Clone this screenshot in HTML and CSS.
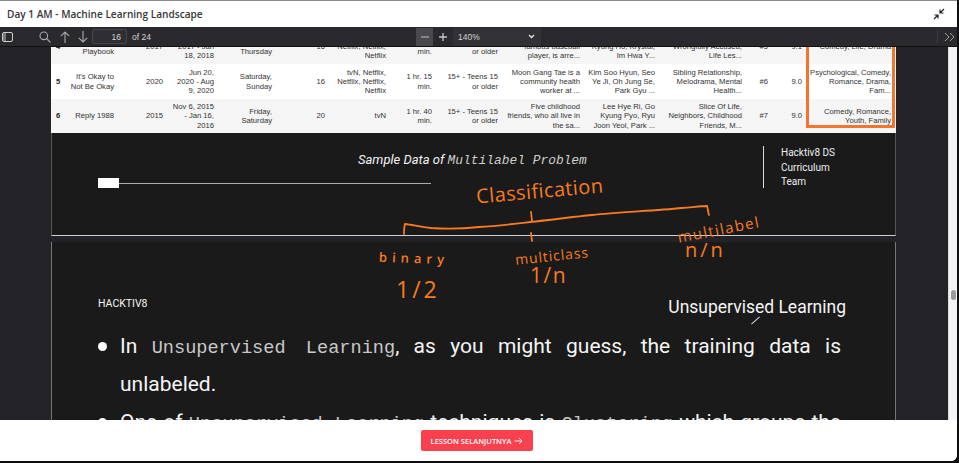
FILE: index.html
```html
<!DOCTYPE html>
<html lang="en">
<head>
<meta charset="utf-8">
<title>Day 1 AM - Machine Learning Landscape</title>
<link rel="stylesheet" href="styles.css">
</head>
<body>
<div class="app">
  <header class="topbar">
    <h1>Day 1 AM - Machine Learning Landscape</h1>
    <svg class="collapse" width="12" height="12" viewBox="0 0 12 12"><path d="M11 1 7.500 4.500M7 1.500V5h3.500M1 11l3.500-3.500M1.500 7H5v3.500" fill="none" stroke="#222" stroke-width="1.200"/></svg>
  </header>
  <div class="toolbar">
    <svg class="tool sidebar" width="12" height="10" viewBox="0 0 12 10"><rect x=".5" y=".5" width="10" height="9" rx="1.500" fill="none" stroke="#cfcfd2"/><path d="M1 1h3v8H1z" fill="#77777b"/></svg>
    <svg class="tool search" width="12" height="12" viewBox="0 0 12 12"><circle cx="4.800" cy="4.800" r="3.800" fill="none" stroke="#aaaaae" stroke-width="1.100"/><path d="m7.500 7.500 4 4" stroke="#aaaaae" stroke-width="1.100"/></svg>
    <svg class="tool up" width="10" height="12" viewBox="0 0 10 12"><path d="M5 12V1M.8 5.200 5 1l4.200 4.200" fill="none" stroke="#aaaaae" stroke-width="1.100"/></svg>
    <svg class="tool down" width="10" height="12" viewBox="0 0 10 12"><path d="M5 0v11M.8 6.800 5 11l4.200-4.200" fill="none" stroke="#aaaaae" stroke-width="1.100"/></svg>
    <span class="page-input">16</span>
    <span class="page-total">of 24</span>
    <span class="zoom-btn active"><svg width="10" height="10" viewBox="0 0 10 10"><path d="M1 5h8" stroke="#9a9a9e" stroke-width="1.300"/></svg></span>
    <span class="zoom-btn plus"><svg width="10" height="10" viewBox="0 0 10 10"><path d="M1 5h8M5 1v8" stroke="#c8c8cc" stroke-width="1.300"/></svg></span>
    <span class="zoom-select">140%<svg width="7" height="5" viewBox="0 0 7 5"><path d="m1 1 2.500 2.500L6 1" fill="none" stroke="#e6e6e6" stroke-width="1.300"/></svg></span>
    <span class="tool-sep"></span>
    <svg class="more" width="11" height="10" viewBox="0 0 11 10"><path d="m1 1 4 4-4 4M6 1l4 4-4 4" fill="none" stroke="#9f9fa3" stroke-width="1"/></svg>
  </div>
  <main class="viewer">
    <div class="doc">
      <table class="data">
        <colgroup><col class="c1"><col class="c2"><col class="c3"><col class="c4"><col class="c5"><col class="c6"><col class="c7"><col class="c8"><col class="c9"><col class="c10"><col class="c11"><col class="c12"><col class="c13"><col class="c14"><col class="c15"></colgroup>
        <tr class="odd">
          <th>4</th><td>Prison<br>Playbook</td><td>2017</td><td>Nov 22,<br>2017 - Jan<br>18, 2018</td><td>Wednesday,<br>Thursday</td><td>16</td><td>tvN, Netflix,<br>Netflix, Netflix,<br>Netflix</td><td>1 hr. 32<br>min.</td><td>15+ - Teens 15<br>or older</td><td>Kim Je Hyeok, a<br>famous baseball<br>player, is arre...</td><td>Park Hae Soo, Jung<br>Kyung Ho, Krystal,<br>Im Hwa Y...</td><td>Prison Life, Black,<br>Wrongfully Accused,<br>Life Les...</td><td>#5</td><td>9.1</td><td>Comedy, Life, Drama</td>
        </tr>
        <tr>
          <th>5</th><td>It's Okay to<br>Not Be Okay</td><td>2020</td><td>Jun 20,<br>2020 - Aug<br>9, 2020</td><td>Saturday,<br>Sunday</td><td>16</td><td>tvN, Netflix,<br>Netflix, Netflix,<br>Netflix</td><td>1 hr. 15<br>min.</td><td>15+ - Teens 15<br>or older</td><td>Moon Gang Tae is a<br>community health<br>worker at ...</td><td>Kim Soo Hyun, Seo<br>Ye Ji, Oh Jung Se,<br>Park Gyu ...</td><td>Sibling Relationship,<br>Melodrama, Mental<br>Health...</td><td>#6</td><td>9.0</td><td>Psychological, Comedy,<br>Romance, Drama,<br>Fam...</td>
        </tr>
        <tr class="odd short">
          <th>6</th><td>Reply 1988</td><td>2015</td><td>Nov 6, 2015<br>- Jan 16,<br>2016</td><td>Friday,<br>Saturday</td><td>20</td><td>tvN</td><td>1 hr. 40<br>min.</td><td>15+ - Teens 15<br>or older</td><td>Five childhood<br>friends, who all live in<br>the sa...</td><td>Lee Hye Ri, Go<br>Kyung Pyo, Ryu<br>Joon Yeol, Park ...</td><td>Slice Of Life,<br>Neighbors, Childhood<br>Friends, M...</td><td>#7</td><td>9.0</td><td>Comedy, Romance,<br>Youth, Family</td>
        </tr>
      </table>
      <section class="slide-foot">
        <p class="caption"><em>Sample Data of</em> <code>Multilabel Problem</code></p>
        <div class="progress"><span class="progress-fill"></span><span class="progress-line"></span></div>
        <p class="credit">Hacktiv8 DS<br>Curriculum<br>Team</p>
      </section>
      <section class="slide">
        <div class="slide-head">
          <span class="brand">HACKTIV8</span>
          <span class="slide-title">Unsupervised Learning</span>
        </div>
        <span class="tick"></span>
        <ul class="points">
          <li>In <code>Unsupervised Learning</code>, as you might guess, the training data is unlabeled.</li>
          <li>One of <code>Unsupervised Learning</code> techniques is <code>Clustering</code> which groups the data into clusters.</li>
        </ul>
      </section>
    </div>
    <div class="highlight"></div>
    <div class="scrollbar"><span class="thumb"></span></div>
    <svg class="ink" width="959" height="463" viewBox="0 0 959 463">
      <path d="M404 234c0-4 0-7 1-10 8 1 16 3 26 4 14 1 30 1 48-1 18-1 34-3 51-5 20-2 42-5 62-7 26-3 60-4 90-7 12-1 21-2 25-2 1 3 1 6 2 9M531 212l1 9M531 233l1 8" fill="none" stroke="#f97a20" stroke-width="1.800" stroke-linecap="round"/>
    </svg>
    <span class="hand classification">Classification</span>
    <span class="hand binary">binary</span>
    <span class="hand half">1/2</span>
    <span class="hand multiclass">multiclass</span>
    <span class="hand onen">1/n</span>
    <span class="hand multilabel">multilabel</span>
    <span class="hand nn">n/n</span>
  </main>
  <footer class="bottombar">
    <button class="next">LESSON SELANJUTNYA <svg width="9" height="8" viewBox="0 0 9 8"><path d="M.5 4h7.500M5 1l3 3-3 3" fill="none" stroke="#fff" stroke-width=".9"/></svg></button>
  </footer>
</div>
</body>
</html>
```
FILE: styles.css
```css
* { box-sizing: border-box; }
html, body { margin: 0; height: 100%; overflow: hidden; background: #0e0e10; }
.app { width: 957px; height: 461px; display: flex; flex-direction: column; background: #fff; border-bottom-right-radius: 6px; overflow: hidden; border-top: 1px solid #8a8a8a; }
.topbar { height: 26px; flex: none; display: flex; align-items: center; justify-content: space-between; padding: 0 12px 0 7px; background: #fff; }
.topbar h1 { margin: 0; font: 600 10.100px/1 "Open Sans", sans-serif; color: #383838; }
.toolbar { height: 20px; flex: none; display: flex; align-items: center; background: #2a2a2e; border-bottom: 1px solid #111; color: #d4d4d6; font: 8.500px "Liberation Sans", sans-serif; position: relative; }
.tool { flex: none; }
.sidebar { margin-left: 2px; }
.search { margin-left: 25px; }
.up { margin-left: 9px; }
.down { margin-left: 8px; }
.page-input { margin-left: 4px; width: 35px; height: 15px; padding: 0 5px; text-align: right; line-height: 14px; border: 1px solid #47474b; border-radius: 2px; background: #2f2f33; }
.page-total { margin-left: 5px; width: 284px; }
.zoom-btn { width: 17px; height: 18px; display: flex; align-items: center; justify-content: center; }
.zoom-btn.plus { width: 20px; }
.zoom-btn.active { background: #4a4a4e; }
.zoom-select { width: 88px; height: 18px; padding: 0 6px 0 5px; display: flex; align-items: center; justify-content: space-between; background: #323236; }
.tool-sep { width: 1px; height: 13px; margin-left: 396px; background: #3c3c40; }
.more { margin-left: 6px; }
.viewer { flex: 1; min-height: 0; position: relative; overflow: hidden; background: #232327; }
.doc { width: 845px; margin: -18px 0 0 51px; }
.data { width: 845px; border-collapse: collapse; table-layout: fixed; background: #fff; font: 7.650px/9.300px "Liberation Sans", sans-serif; color: #333; }
.data tr { height: 35px; }
.data tr.short { height: 34px; }
.data tr.odd { background: #f5f5f5; }
.data th, .data td { padding: 0 3px 0 0; text-align: right; vertical-align: middle; font-weight: 400; white-space: nowrap; overflow: visible; }
.data th { font-weight: 700; text-align: center; padding: 0; color: #222; }
.c1 { width: 14px; }
.c2 { width: 52px; }
.c3 { width: 49px; }
.c4 { width: 51px; }
.c5 { width: 58px; }
.c6 { width: 53px; }
.c7 { width: 61px; }
.c8 { width: 46px; }
.c9 { width: 66px; }
.c10 { width: 82px; }
.c11 { width: 75px; }
.c12 { width: 87px; }
.c13 { width: 26px; }
.c14 { width: 34px; }
.c15 { width: 91px; }
.data td:last-child { padding-right: 5px; }
.highlight { position: absolute; left: 806px; top: -10px; width: 89px; height: 91px; border: 3px solid #f4742b; pointer-events: none; }
.slide-foot { position: relative; height: 103px; background: #1a1a1a; border-bottom: 1px solid #cfcfcf; color: #fff; border-left: 1px solid #555; border-right: 1px solid #555; }
.caption { position: absolute; left: 306px; top: 18px; margin: 0; font: 13px/18px Roboto, sans-serif; color: #f2f2f2; white-space: nowrap; }
.caption code { font: italic 12.900px "Liberation Mono", monospace; color: #cfcfcf; }
.progress { position: absolute; left: 46px; top: 45px; width: 333px; height: 10px; display: flex; align-items: center; }
.progress-fill { width: 21px; height: 10px; background: #fff; flex: none; }
.progress-line { flex: 1; height: 1px; background: #aaa; }
.credit { position: absolute; left: 711px; top: 13px; height: 42px; margin: 0; padding-left: 17px; border-left: 1px solid #ddd; font: 10px/14.500px Roboto, sans-serif; color: #eee; }
.slide { position: relative; margin-top: 6px; height: 260px; padding: 51px 54px 0 46px; background: #1a1a1a; color: #f5f5f5; border-left: 1px solid #777; border-right: 1px solid #777; }
.slide-head { display: flex; justify-content: space-between; align-items: flex-start; }
.brand { font: 10.500px/20px Roboto, sans-serif; margin-top: 1px; }
.slide-title { font: 17.500px/24px Roboto, sans-serif; margin-top: 2px; margin-right: -5px; }
.tick { position: absolute; left: 698px; top: 78px; width: 11px; height: 1px; background: #ddd; transform: rotate(-42deg); }
.points { list-style: none; margin: 8px 0 0; padding: 0 0 0 22px; font: 21px/38px Roboto, sans-serif; text-align: justify; }
.points li { position: relative; }
.points li::before { content: ""; position: absolute; left: -22px; top: 15px; width: 9px; height: 9px; border-radius: 50%; background: #fff; }
.points code { font: 18.600px "Liberation Mono", monospace; color: #c8c8c8; }
.scrollbar { position: absolute; right: 0; top: 0; bottom: 0; width: 9px; background: #f4f4f6; border-left: 1px solid #ddd; }
.thumb { position: absolute; left: 2px; top: 243px; width: 5px; height: 10px; border-radius: 3px; background: #9a9a9e; }
.ink { position: absolute; left: 0; top: -47px; pointer-events: none; }
.hand { position: absolute; color: #f97a20; font-family: "Open Sans", sans-serif; font-weight: 400; white-space: nowrap; line-height: 1; }
.classification { left: 476px; top: 134px; font-size: 20px; letter-spacing: .4px; transform: rotate(-5deg); }
.binary { left: 379px; top: 205px; font-size: 13px; letter-spacing: 5px; font-weight: 600; transform: rotate(2deg); }
.half { left: 396px; top: 231px; font-size: 23px; letter-spacing: 3px; }
.multiclass { left: 515px; top: 202px; font-size: 14px; letter-spacing: .9px; transform: rotate(-6deg); }
.onen { left: 530px; top: 218px; font-size: 21px; letter-spacing: 1.500px; }
.multilabel { left: 677px; top: 175px; font-size: 15px; letter-spacing: 1.400px; transform: rotate(-11deg); }
.nn { left: 685px; top: 193px; font-size: 20px; letter-spacing: 3px; }
.bottombar { height: 41px; flex: none; display: flex; align-items: flex-start; justify-content: center; padding-top: 10px; background: #fff; position: relative; }
.next { width: 112px; height: 21px; margin-right: 3px; padding: 0; border: 0; border-radius: 2px; background: #f8404f; color: #fff; font: 600 7.500px "Open Sans", sans-serif; display: flex; align-items: center; justify-content: center; gap: 3px; }
```
